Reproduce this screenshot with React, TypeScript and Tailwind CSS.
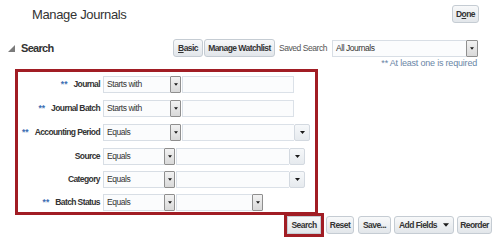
import type { ReactNode } from "react";

const RED = "border-[#a11d24]";
// the screenshot text is very condensed, so small sizes with tight tracking
const TXT = "text-[8.5px] tracking-[-0.45px] text-[#333] whitespace-nowrap";
const BOLD = "text-[8.5px] tracking-[-0.55px] font-bold text-[#333] whitespace-nowrap";

const Arrow = ({ w = 5 }: { w?: number }) => (
  <svg width={w} height={Math.ceil(w * 0.6)} viewBox={`0 0 ${w} ${w * 0.6}`}>
    <path d={`M0 0H${w}L${w / 2} ${w * 0.6}Z`} fill="#1a1a1a" />
  </svg>
);

function Btn({ children, className = "" }: { children: ReactNode; className?: string }) {
  return (
    <div
      className={`h-[18px] flex items-center justify-center rounded-[3px] border border-[#c5ccd3] bg-linear-to-b from-[#f8f9fa] to-[#e2e6ea] ${BOLD} ${className}`}
    >
      {children}
    </div>
  );
}

const DropBtn = ({ className = "w-[11px]" }: { className?: string }) => (
  <div className={`flex items-center justify-center border border-[#8f8f8f] rounded-[1px] bg-linear-to-b from-[#f2f2f2] to-[#d9d9d9] ${className}`}>
    <Arrow w={4} />
  </div>
);

/* operator select: text box + small dark-bordered drop button */
function OpSelect({ value, className }: { value: string; className: string }) {
  return (
    <div className={`h-[17px] flex ${className}`}>
      <div className={`flex-1 flex items-center pl-[3px] border border-r-0 border-[#d8dee5] bg-[#fbfcfd] ${TXT}`}>{value}</div>
      <DropBtn />
    </div>
  );
}

/* value select with the wide light drop button */
function ValSelect({ className, narrow = false }: { className: string; narrow?: boolean }) {
  return (
    <div className={`h-[17px] flex ${className}`}>
      <div className="flex-1 border border-r-0 border-[#dbe1e8] bg-[#fbfcfd]" />
      {narrow ? (
        <DropBtn />
      ) : (
        <div className="w-[16px] flex items-center justify-center border border-[#d3d9e0] rounded-[2px] bg-linear-to-b from-[#f6f8fa] to-[#e6eaee]">
          <Arrow w={5} />
        </div>
      )}
    </div>
  );
}

const Input = ({ className }: { className: string }) => (
  <div className={`h-[17px] border border-[#dbe1e8] bg-[#fbfcfd] ${className}`} />
);

function Row({ label, req, children, className = "" }: { label: string; req?: boolean; children: ReactNode; className?: string }) {
  return (
    <div className={`h-[17px] flex items-center ${className}`}>
      <div className="w-[82px] text-right text-[8.5px] tracking-[-0.6px] font-bold text-[#333] whitespace-nowrap">
        {req && <span className="text-[#3d6fb3] mr-[6px] tracking-[0px]">**</span>}
        {label}
      </div>
      <div className="ml-[3px] flex">{children}</div>
    </div>
  );
}

export default function App() {
  return (
    <div className="w-[500px] h-[240px] bg-white overflow-hidden font-['Liberation_Sans',Arial,sans-serif]">
      {/* title */}
      <div className="pt-[5px] pl-[32px] pr-[21px] flex justify-between">
        <div className="text-[13px] tracking-[-0.35px] leading-[18px] text-[#333] mt-[1px]">Manage Journals</div>
        <Btn className="w-[27px]">
          D<span className="underline">o</span>ne
        </Btn>
      </div>

      {/* search header */}
      <div className="mt-[15px] h-[18px] flex items-center pl-[8px] pr-[22px]">
        <svg width="7" height="7" viewBox="0 0 7 7" className="mt-[1px]">
          <path d="M0 7L7 0V7Z" fill="#7b7b7b" />
        </svg>
        <span className="ml-[6px] text-[11px] tracking-[-0.7px] font-bold text-[#333]">Search</span>
        <div className="ml-auto flex items-center">
          <Btn className="w-[30px] h-[17px]">
            <span className="underline">B</span>asic
          </Btn>
          <Btn className="w-[71px] h-[17px] ml-[1px]">Manage Watchlist</Btn>
          <span className={`ml-[4px] ${TXT} text-[#555]`}>Saved Search</span>
          <div className="ml-[5px] w-[146px] h-[17px] flex">
            <div className={`flex-1 flex items-center pl-[3px] border border-r-0 border-[#d8dee5] bg-[#fbfcfd] ${TXT}`}>
              All Journals
            </div>
            <DropBtn className="w-[12px]" />
          </div>
        </div>
      </div>

      <div className="mt-[1px] pr-[23px] text-right text-[9px] tracking-[-0.2px] leading-[10px] text-[#6a86a6]">
        ** At least one is required
      </div>

      {/* search fields */}
      <div className={`mt-[1px] ml-[15px] w-[303px] border-[3px] ${RED} pt-[4px] pb-[1px] flex flex-col gap-[6px]`}>
        <Row label="Journal" req>
          <OpSelect value="Starts with" className="w-[78px]" />
          <Input className="ml-[1px] w-[112px]" />
        </Row>
        <Row label="Journal Batch" req className="mt-[1px]">
          <OpSelect value="Starts with" className="w-[78px]" />
          <Input className="ml-[1px] w-[112px]" />
        </Row>
        <Row label="Accounting Period" req className="mt-[1px]">
          <OpSelect value="Equals" className="w-[78px]" />
          <ValSelect className="ml-[1px] w-[128px]" />
        </Row>
        <Row label="Source" className="mt-[1px]">
          <OpSelect value="Equals" className="w-[72px]" />
          <ValSelect className="ml-[1px] w-[129px]" />
        </Row>
        <Row label="Category">
          <OpSelect value="Equals" className="w-[72px]" />
          <ValSelect className="ml-[1px] w-[129px]" />
        </Row>
        <Row label="Batch Status" req>
          <OpSelect value="Equals" className="w-[72px]" />
          <ValSelect narrow className="ml-[1px] w-[87px]" />
        </Row>
      </div>

      {/* actions */}
      <div className="mt-[1px] flex justify-end pr-[8px]">
        <Btn className="w-[34px] rounded-none outline-3 outline-solid outline-[#a11d24]">Search</Btn>
        <Btn className="w-[28px] ml-[5px]">Reset</Btn>
        <Btn className="w-[33px] ml-[4px]">Save...</Btn>
        <Btn className="w-[60px] ml-[3px] gap-[6px]">
          Add Fields
          <Arrow w={6} />
        </Btn>
        <Btn className="w-[35px] ml-[3px]">Reorder</Btn>
      </div>
    </div>
  );
}
